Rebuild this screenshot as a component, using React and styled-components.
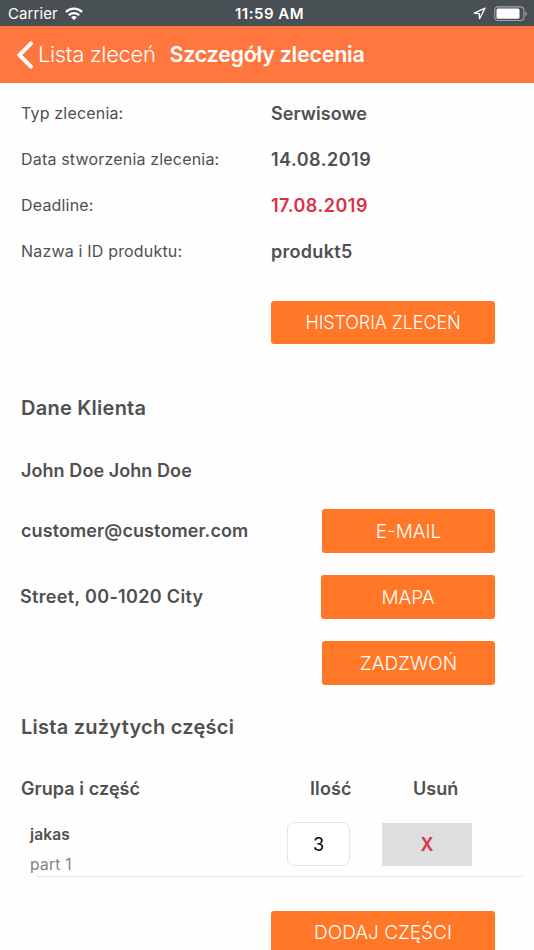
import styled, { createGlobalStyle } from 'styled-components';

const details = [
  { label: 'Typ zlecenia:', value: 'Serwisowe', spacing: 0.05 },
  { label: 'Data stworzenia zlecenia:', value: '14.08.2019', spacing: 0.5 },
  { label: 'Deadline:', value: '17.08.2019', spacing: 0.5, urgent: true },
  { label: 'Nazwa i ID produktu:', value: 'produkt5', spacing: 0.3 },
];

export default function App() {
  return (
    <Screen>
      <GlobalStyle />
      <StatusBar>
        <Carrier>
          <span>Carrier</span>
          <WifiIcon />
        </Carrier>
        <Clock>11:59 AM</Clock>
        <Indicators>
          <LocationIcon />
          <BatteryIcon />
        </Indicators>
      </StatusBar>

      <NavBar>
        <BackIcon />
        <BackLabel>Lista zleceń</BackLabel>
        <NavTitle>Szczegóły zlecenia</NavTitle>
      </NavBar>

      <Details>
        {details.map((item) => (
          <DetailRow key={item.label}>
            <Label>{item.label}</Label>
            <Value $spacing={item.spacing} $urgent={item.urgent}>
              {item.value}
            </Value>
          </DetailRow>
        ))}
      </Details>
      <ButtonRow $top={26}>
        <Button $width={224} $height={43} $size={18} $spacing={-0.12}>
          HISTORIA ZLECEŃ
        </Button>
      </ButtonRow>

      <Heading $top={50}>Dane Klienta</Heading>
      <ClientName>
        <Value $spacing={0.07}>John Doe John Doe</Value>
      </ClientName>
      <ContactRow>
        <Value $spacing={0.1}>customer@customer.com</Value>
        <Button $width={173}>E-MAIL</Button>
      </ContactRow>
      <ContactRow $left={20}>
        <Value $spacing={0.33}>Street, 00-1020 City</Value>
        <Button $width={174}>MAPA</Button>
      </ContactRow>
      <ContactRow>
        <span />
        <Button $width={173}>ZADZWOŃ</Button>
      </ContactRow>

      <Heading $top={17}>Lista zużytych części</Heading>
      <PartsHeader>
        <Value $spacing={0.07}>Grupa i część</Value>
        <Value $spacing={0.1}>Ilość</Value>
        <Value>Usuń</Value>
      </PartsHeader>
      <PartRow>
        <PartInfo>
          <PartGroup>jakas</PartGroup>
          <PartName>part 1</PartName>
        </PartInfo>
        <Quantity>3</Quantity>
        <RemoveBtn>X</RemoveBtn>
      </PartRow>
      <Divider />
      <ButtonRow $top={33.5}>
        <Button $width={224}>DODAJ CZĘŚCI</Button>
      </ButtonRow>
    </Screen>
  );
}

function WifiIcon() {
  return (
    <svg width='18' height='14' viewBox='0 0 18 14' fill='none' stroke='#fff' strokeWidth='2.3'>
      <path d='M.9 5a11.5 11.5 0 0 1 16.2 0' />
      <path d='M3.8 8.2a7.4 7.4 0 0 1 10.4 0' />
      <path d='M9 13.2 6.1 10.3a4.2 4.2 0 0 1 5.8 0z' fill='#fff' stroke='none' />
    </svg>
  );
}

function LocationIcon() {
  return (
    <svg width='13' height='13' viewBox='0 0 13 13' fill='none' stroke='#fff' strokeWidth='1.3'>
      <path d='M12 1.2 1.2 6.2l5 .4.4 5z' strokeLinejoin='round' />
    </svg>
  );
}

function BatteryIcon() {
  return (
    <svg width='34' height='16' viewBox='0 0 34 16'>
      <rect x='.7' y='.9' width='29.2' height='13.6' rx='3.4' fill='none' stroke='#a0a5a7' strokeWidth='1.1' />
      <rect x='2.5' y='2.6' width='23' height='10.2' rx='1.6' fill='#fff' />
      <path d='M31.3 5.4q1.7.8 1.7 2.3t-1.7 2.3z' fill='#a0a5a7' />
    </svg>
  );
}

function BackIcon() {
  return (
    <svg width='19' height='28' viewBox='0 0 19 28' fill='none' stroke='#fff' strokeWidth='4'>
      <path d='M16 2.4 4.4 14 16 25.6' strokeLinecap='round' />
    </svg>
  );
}

const GlobalStyle = createGlobalStyle`
  body {
    margin: 0;
    background: #fefefe;
    overflow: hidden;
  }

  * {
    box-sizing: border-box;
  }
`;

const Screen = styled.div`
  width: 534px;
  height: 950px;
  overflow: hidden;
  background: #fefefe;
  color: #505050;
  font-family: Inter, 'Liberation Sans', sans-serif;
  white-space: nowrap;
`;

const StatusBar = styled.div`
  display: grid;
  grid-template-columns: 1fr auto 1fr;
  align-items: center;
  height: 26px;
  padding: 1px 6px 0 8px;
  background: #485054;
  color: #fff;
`;

const Carrier = styled.div`
  display: flex;
  align-items: center;
  gap: 7px;
  font-size: 15px;
  letter-spacing: 0.1px;
`;

const Clock = styled.div`
  padding-left: 3px;
  font-size: 15px;
  font-weight: 600;
  letter-spacing: 0.5px;
`;

const Indicators = styled.div`
  display: flex;
  align-items: center;
  justify-content: flex-end;
  gap: 8px;
`;

const NavBar = styled.div`
  display: flex;
  align-items: center;
  height: 57px;
  padding-left: 15px;
  background: #ff763e;
  color: #fff;
`;

const BackLabel = styled.a`
  margin-left: 4px;
  padding-bottom: 1px;
  font-size: 22px;
  font-weight: 300;
  letter-spacing: -0.35px;
`;

const NavTitle = styled.div`
  margin-left: 14px;
  padding-bottom: 1px;
  font-size: 21.5px;
  font-weight: 600;
  letter-spacing: -0.26px;
`;

const Details = styled.div`
  padding-top: 8px;
`;

const DetailRow = styled.div`
  display: grid;
  grid-template-columns: 250px 1fr;
  align-items: center;
  height: 46px;
  padding-left: 21px;
`;

const Label = styled.div`
  padding-bottom: 2px;
  font-size: 16px;
  line-height: 20px;
  letter-spacing: 0.18px;
`;

const Value = styled.div`
  color: ${(p) => (p.$urgent ? '#dc2f49' : 'inherit')};
  font-size: 18px;
  font-weight: 600;
  line-height: 22px;
  letter-spacing: ${(p) => p.$spacing || 0}px;
`;

const ButtonRow = styled.div`
  display: flex;
  justify-content: flex-end;
  padding: ${(p) => p.$top}px 39px 0 0;
`;

const Button = styled.div`
  display: flex;
  align-items: center;
  justify-content: center;
  width: ${(p) => p.$width}px;
  height: ${(p) => p.$height || 44}px;
  border-radius: 3px;
  background: #ff7727;
  color: #fff;
  font-size: ${(p) => p.$size || 19}px;
  font-weight: 300;
  letter-spacing: ${(p) => p.$spacing || 0}px;
`;

const Heading = styled.div`
  margin-top: ${(p) => p.$top}px;
  padding-left: 21px;
  font-size: 20px;
  font-weight: 600;
  line-height: 28px;
  letter-spacing: 0.25px;
`;

const ClientName = styled.div`
  padding: 38px 0 16px 21px;
`;

const ContactRow = styled.div`
  display: flex;
  align-items: center;
  justify-content: space-between;
  height: 66px;
  padding: 0 39px 0 ${(p) => p.$left || 21}px;
`;

const PartsHeader = styled.div`
  display: grid;
  grid-template-columns: 289px 103px 1fr;
  align-items: center;
  height: 46px;
  margin-top: 25px;
  padding-left: 21px;
`;

const PartRow = styled.div`
  display: grid;
  grid-template-columns: 257px 63px 90px;
  align-items: center;
  height: 64px;
  padding-left: 30px;
`;

const PartInfo = styled.div`
  display: grid;
  gap: 10px;
  padding-top: 12px;
`;

const PartGroup = styled.div`
  font-size: 15.5px;
  font-weight: 600;
  line-height: 20px;
  letter-spacing: 0.15px;
`;

const PartName = styled.div`
  color: #828282;
  font-size: 15.5px;
  line-height: 20px;
  letter-spacing: 0.3px;
`;

const Quantity = styled.div`
  display: flex;
  align-items: center;
  justify-content: center;
  height: 44px;
  border: 1px solid #e7e7e7;
  border-radius: 7px;
  background: #fff;
  color: #000;
  font-size: 18px;
`;

const RemoveBtn = styled.div`
  display: flex;
  align-items: center;
  justify-content: center;
  height: 43px;
  margin: 1px -32px 0 32px;
  background: #dedede;
  color: #dc2f49;
  font-size: 18px;
  font-weight: 600;
`;

const Divider = styled.div`
  height: 1px;
  margin: 0 11px 0 36px;
  background: #e4e4e4;
`;
